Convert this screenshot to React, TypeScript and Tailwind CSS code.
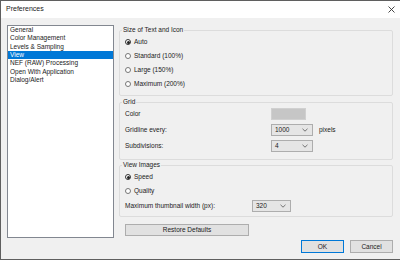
import React from 'react';

const items = ['General', 'Color Management', 'Levels & Sampling', 'View', 'NEF (RAW) Processing', 'Open With Application', 'Dialog/Alert'];

function Radio({ label, on }: { label: string; on?: boolean }) {
  return (
    <div className="flex items-center h-[14px]">
      <span className={`w-[6px] h-[6px] rounded-full border bg-white flex items-center justify-center ${on ? 'border-[#333]' : 'border-[#777]'}`}>
        {on && <span className="w-[3px] h-[3px] rounded-full bg-[#222]" />}
      </span>
      <span className="ml-[3px]">{label}</span>
    </div>
  );
}

function Select({ value, w }: { value: string; w: string }) {
  return (
    <div className={`${w} h-[12px] bg-[#e5e5e5] border border-[#adadad] flex items-center justify-between pl-[3px] pr-[4px]`}>
      <span>{value}</span>
      <svg width="6" height="4" viewBox="0 0 6 4"><path d="M0.5 0.8 L3 3.2 L5.5 0.8" fill="none" stroke="#555" strokeWidth="0.8" /></svg>
    </div>
  );
}

function Group({ title, children, cls }: { title: string; children: React.ReactNode; cls: string }) {
  return (
    <fieldset className={`border border-[#dcdcdc] rounded-[2px] pl-[5px] ${cls}`}>
      <legend className="leading-[8px] ml-[-3px] px-[1px] text-[#222]">{title}</legend>
      {children}
    </fieldset>
  );
}

export default function App() {
  return (
    <div className="w-[400px] h-[260px] bg-[#f0f0f0] border border-r-0 border-[#5f5f5f] flex flex-col font-['Liberation_Sans',Arial,sans-serif] text-[6.5px] text-[#1a1a1a]">
      <div className="h-[17px] bg-white flex items-center justify-between pl-[5px] pr-[5px]">
        <span className="text-[7px]">Preferences</span>
        <svg width="7" height="7" viewBox="0 0 7 7"><path d="M0.5 0.5 L6.5 6.5 M6.5 0.5 L0.5 6.5" stroke="#333" strokeWidth="0.9" /></svg>
      </div>
      <div className="flex flex-1 pt-[7px] pl-[6px]">
        <div className="w-[107px] h-[213px] bg-white border border-[#828790]">
          {items.map(it => (
            <div key={it} className={`h-[8.33px] leading-[8.33px] pl-[2px] ${it === 'View' ? 'bg-[#0078d7] text-white' : ''}`}>{it}</div>
          ))}
        </div>
        <div className="w-[274px] ml-[5px] pt-[1px]">
          <Group title="Size of Text and Icon" cls="pt-[1px] pb-[4px]">
            <Radio label="Auto" on />
            <Radio label="Standard (100%)" />
            <Radio label="Large (150%)" />
            <Radio label="Maximum (200%)" />
          </Group>
          <Group title="Grid" cls="mt-[2px] pb-[5px]">
            <div className="flex items-center h-[16px]">
              <span className="w-[146px]">Color</span>
              <div className="w-[35px] h-[12px] bg-[#c6c6c6] border border-[#d0d0d0]" />
            </div>
            <div className="flex items-center h-[16px]">
              <span className="w-[146px]">Gridline every:</span>
              <Select value="1000" w="w-[42px]" />
              <span className="ml-[6px]">pixels</span>
            </div>
            <div className="flex items-center h-[16px]">
              <span className="w-[146px]">Subdivisions:</span>
              <Select value="4" w="w-[42px]" />
            </div>
          </Group>
          <Group title="View Images" cls="mt-[1px] pt-[1px] pb-[2px]">
            <Radio label="Speed" on />
            <Radio label="Quality" />
            <div className="flex items-center h-[16px]">
              <span className="w-[127px]">Maximum thumbnail width (px):</span>
              <Select value="320" w="w-[39px]" />
            </div>
          </Group>
          <div className="mt-[7px] ml-[6px] w-[124px] h-[12px] bg-[#e1e1e1] border border-[#adadad] flex items-center justify-center">Restore Defaults</div>
          <div className="flex justify-end gap-[6px] mt-[4px]">
            <div className="w-[43px] h-[13px] bg-[#e1e1e1] border border-[#0078d7] flex items-center justify-center">OK</div>
            <div className="w-[43px] h-[13px] bg-[#e1e1e1] border border-[#adadad] flex items-center justify-center">Cancel</div>
          </div>
        </div>
      </div>
    </div>
  );
}
